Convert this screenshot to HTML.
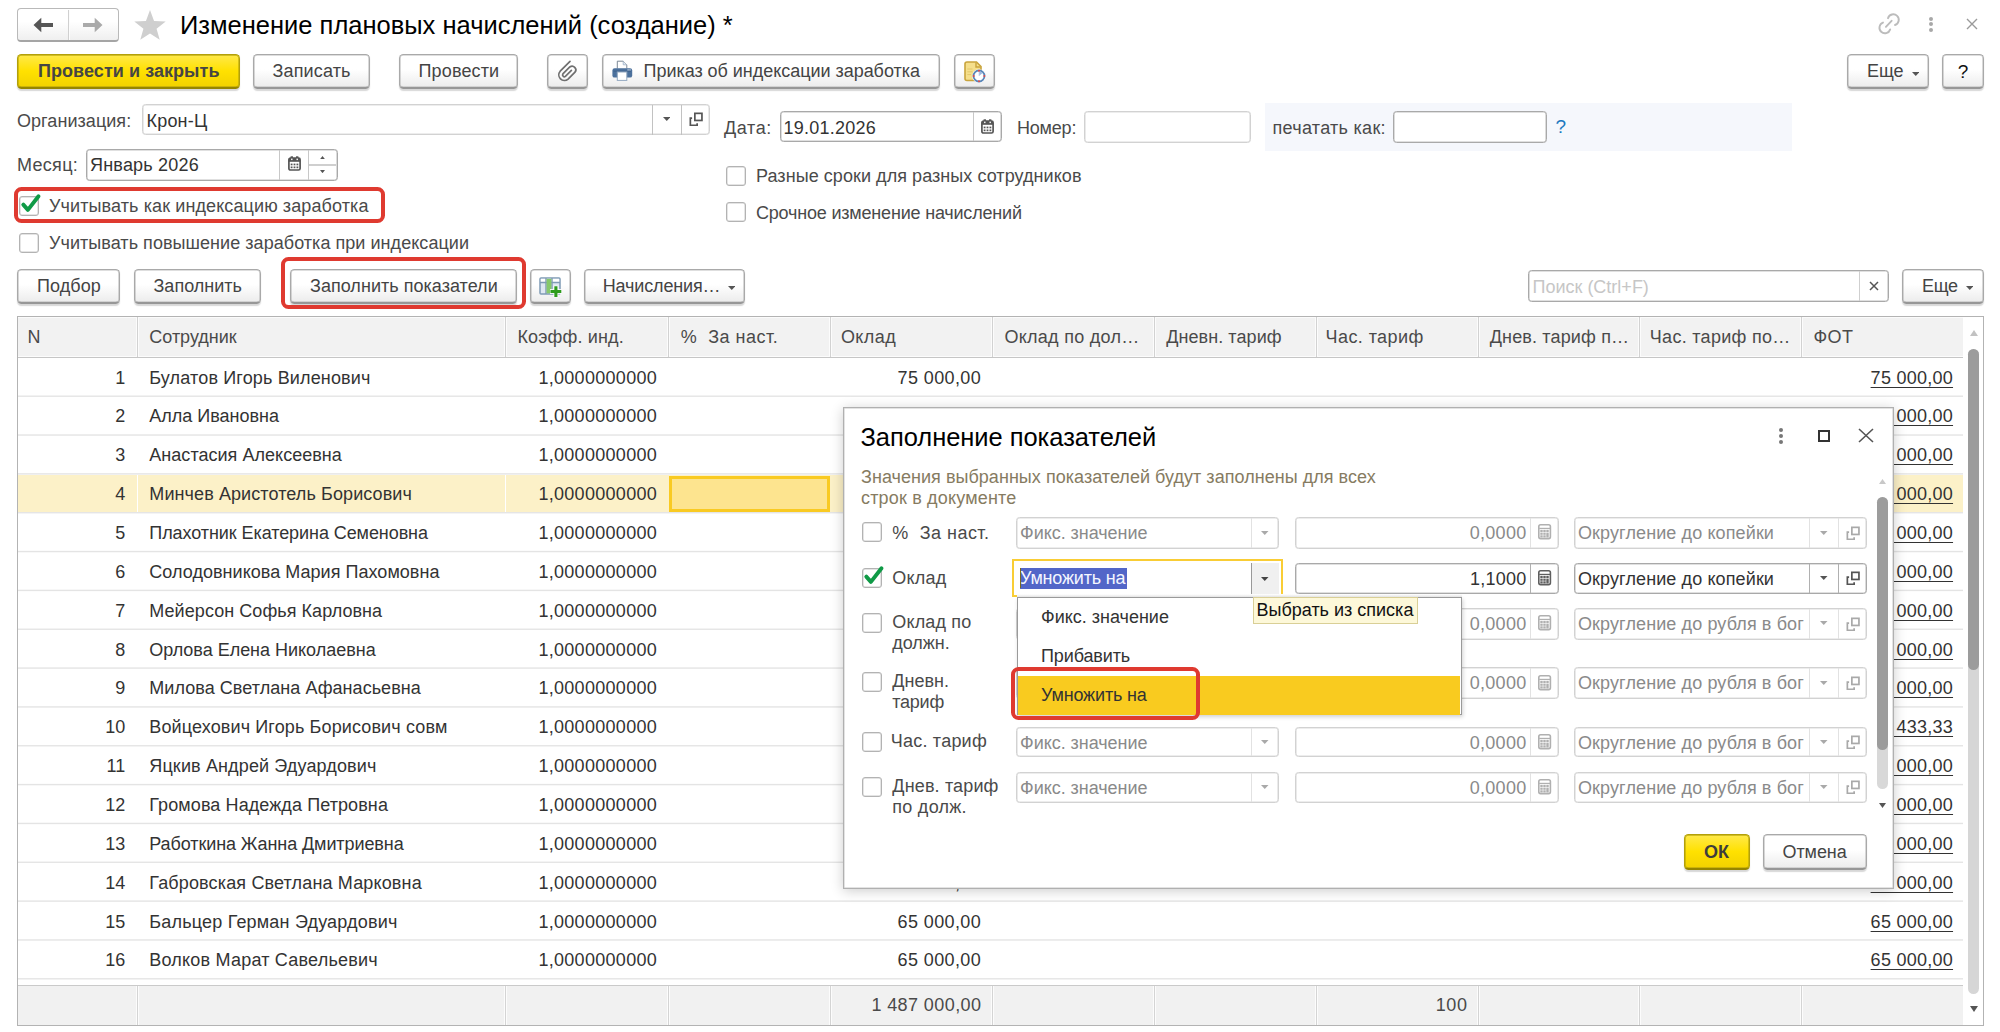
<!DOCTYPE html><html><head><meta charset="utf-8"><style>
html,body{margin:0;padding:0}
body{width:2000px;height:1032px;position:relative;overflow:hidden;background:#fff;font-family:"Liberation Sans",sans-serif;font-size:18px;color:#333}
.a{position:absolute}
.t,.t2{position:absolute;white-space:nowrap}
.btn{position:absolute;box-sizing:border-box;border:1px solid #a9a9a9;border-bottom:2px solid #979797;border-radius:4.5px;background:linear-gradient(#fff 0%,#fff 45%,#ececec 100%);box-shadow:0 1.6px 1.2px rgba(0,0,0,.16),inset 0 0 0 0.6px rgba(169,169,169,.75)}
.ybtn{border:1px solid #b3a00a;border-bottom:2px solid #958500;box-shadow:0 1.6px 1.2px rgba(0,0,0,.16),inset 0 0 0 0.7px rgba(179,160,10,.8);background:linear-gradient(#ffe94a 0%,#ffe100 50%,#f2d200 100%)}
.fld{position:absolute;box-sizing:border-box;border:1px solid #d2d2d2;border-radius:3.5px;background:#fff;box-shadow:inset 0 0 0 0.6px rgba(210,210,210,.8)}
.fldd{position:absolute;box-sizing:border-box;border:1px solid #a9a9a9;border-radius:3.5px;background:#fff;box-shadow:inset 0 0 0 0.6px rgba(169,169,169,.7)}
.vl{position:absolute;width:1.3px}
</style></head><body>

<div class="a" style="left:17px;top:8.2px;width:101.8px;height:33.5px;box-sizing:border-box;border:1.4px solid #b9b9b9;border-bottom:2px solid #a5a5a5;border-radius:4px;background:linear-gradient(#fff 40%,#efefef)"></div>
<div class="a" style="left:68.00px;top:9.50px;width:1.30px;height:30.70px;background:#d0d0d0"></div>
<div class="a" style="left:69.30px;top:9.50px;width:1.00px;height:30.70px;background:#fcfcfc"></div>
<svg class="a" style="left:32.70px;top:16.90px" width="21" height="16" viewBox="0 0 21 16"><path d="M0.5 8 L8.3 0.7 V5.9 H20 V9.9 H8.3 V15.3 Z" fill="#555"/></svg>
<svg class="a" style="left:82.00px;top:16.90px" width="21" height="16" viewBox="0 0 21 16"><path d="M20.5 8 L12.7 0.7 V5.9 H1 V9.9 H12.7 V15.3 Z" fill="#aaa"/></svg>
<svg class="a" style="left:133.00px;top:8.00px" width="34" height="34" viewBox="0 0 34 34"><polygon points="17.00,2.00 21.06,12.92 32.69,13.40 23.56,20.63 26.70,31.85 17.00,25.40 7.30,31.85 10.44,20.63 1.31,13.40 12.94,12.92" fill="#cfcfcf"/></svg>
<div class="t" style="left:180.00px;top:9.76px;font-size:25.5px;line-height:30px;color:#000;font-weight:normal;">Изменение плановых начислений (создание) *</div>
<svg class="a" style="left:1874.00px;top:10.00px" width="30" height="28" viewBox="0 0 30 28"><g fill="none" stroke="#bcbcbc" stroke-width="1.9" stroke-linecap="round"><path d="M14 8.2 A5.5 5.5 0 1 1 21 15"/><path d="M9 12.6 A5.5 5.5 0 1 0 16.2 19.4"/><path d="M17.6 10.8 L11.9 16.8"/></g></svg>
<div class="a" style="left:1928.60px;top:16.50px;width:4.00px;height:4.00px;border-radius:50%;background:#a8a8a8"></div>
<div class="a" style="left:1928.60px;top:22.00px;width:4.00px;height:4.00px;border-radius:50%;background:#a8a8a8"></div>
<div class="a" style="left:1928.60px;top:27.50px;width:4.00px;height:4.00px;border-radius:50%;background:#a8a8a8"></div>
<svg class="a" style="left:1966.00px;top:18.00px" width="12" height="12" viewBox="0 0 12 12"><path d="M1 1 L11 11 M11 1 L1 11" stroke="#9a9a9a" stroke-width="1.4"/></svg>
<div class="btn ybtn" style="left:17.00px;top:54.00px;width:223.20px;height:35.10px"></div>
<div class="t" style="left:38.00px;top:60.36px;font-size:18px;line-height:22px;color:#454545;font-weight:bold;letter-spacing:0.059px;">Провести и закрыть</div>
<div class="btn" style="left:253.00px;top:54.00px;width:117.40px;height:35.10px"></div>
<div class="t" style="left:272.50px;top:60.36px;font-size:18px;line-height:22px;color:#444;font-weight:normal;letter-spacing:0.143px;">Записать</div>
<div class="btn" style="left:399.40px;top:54.00px;width:119.00px;height:35.10px"></div>
<div class="t" style="left:418.50px;top:60.36px;font-size:18px;line-height:22px;color:#444;font-weight:normal;letter-spacing:0.143px;">Провести</div>
<div class="btn" style="left:547.40px;top:54.00px;width:41.00px;height:35.10px"></div>
<svg class="a" style="left:554.00px;top:57.00px" width="28" height="26" viewBox="0 0 28 26"><path d="M16 4.3 L6.2 14.2 A5.6 5.6 0 0 0 14.1 22.1 L21 15.2 A3.7 3.7 0 0 0 15.8 10 L8.9 16.9 A1.8 1.8 0 0 0 11.4 19.4 L17.4 13.4" fill="none" stroke="#6f6f6f" stroke-width="1.7" stroke-linecap="round"/></svg>
<div class="btn" style="left:602.30px;top:54.00px;width:337.70px;height:35.10px"></div>
<svg class="a" style="left:611.00px;top:60.00px" width="23" height="22" viewBox="0 0 23 22"><path d="M6.3 8.5 V1.2 H12.2 L15.8 4.8 V8.5" fill="#fff" stroke="#6d7b8a" stroke-width="0.9"/><path d="M12.2 1.2 V4.8 H15.8" fill="#dfe8f2" stroke="#9fb2c8" stroke-width="0.8"/><rect x="1.4" y="8.2" width="19.8" height="9.4" rx="2.2" fill="#4b709c"/><path d="M2.5 11.2 H20" stroke="#3c5f88" stroke-width="0.8"/><rect x="6.3" y="12" width="9.5" height="8.4" fill="#fff" stroke="#93a8c0" stroke-width="1"/><rect x="16.5" y="9.3" width="1.2" height="1.2" fill="#d6e0ea"/><rect x="18.4" y="9.3" width="1.2" height="1.2" fill="#d6e0ea"/></svg>
<div class="t" style="left:643.50px;top:60.36px;font-size:18px;line-height:22px;color:#444;font-weight:normal;letter-spacing:-0.034px;">Приказ об индексации заработка</div>
<div class="btn" style="left:953.50px;top:54.00px;width:41.00px;height:35.10px"></div>
<svg class="a" style="left:963.00px;top:60.00px" width="24" height="24" viewBox="0 0 24 24"><path d="M2 4 a2 2 0 0 1 2 -2 H13.5 L18 6.5 V20.5 H4 a2 2 0 0 1 -2 -2 Z" fill="#f5df8c" stroke="#c9a43c" stroke-width="1.6"/><path d="M13 2.5 V7 H17.5" fill="none" stroke="#c9a43c" stroke-width="1.4"/><path d="M4.3 9 H9.5 M4.3 11.8 H9.5 M4.3 14.6 H8" stroke="#e3c86a" stroke-width="1"/><circle cx="16" cy="16" r="6.8" fill="#fff"/><circle cx="16" cy="16" r="5.5" fill="#fff" stroke="#5a86b8" stroke-width="1.8"/><path d="M16 16 V11.3 A4.7 4.7 0 0 1 19.6 13 Z" fill="#9db8de"/><path d="M16 16 V12" stroke="#c8d6ea" stroke-width="0.8"/><circle cx="16" cy="10.7" r="1" fill="#e04848"/><circle cx="16" cy="21.3" r="1" fill="#e04848"/><circle cx="10.7" cy="16" r="1" fill="#e04848"/><circle cx="21.3" cy="16" r="1" fill="#e04848"/></svg>
<div class="btn" style="left:1847.00px;top:54.00px;width:82.00px;height:35.10px"></div>
<div class="t" style="left:1867.00px;top:60.36px;font-size:18px;line-height:22px;color:#444;font-weight:normal;">Еще</div>
<svg class="a" style="left:1911.75px;top:71.50px" width="7.5" height="4" viewBox="0 0 7.5 4"><path d="M0 0 L7.5 0 L3.75 4 Z" fill="#555"/></svg>
<div class="btn" style="left:1942.20px;top:54.00px;width:41.40px;height:35.10px"></div>
<div class="t" style="left:1957.80px;top:59.71px;font-size:19px;line-height:23px;color:#111;font-weight:normal;">?</div>
<div class="t" style="left:17.00px;top:109.76px;font-size:18px;line-height:22px;color:#4a4a4a;font-weight:normal;letter-spacing:0.055px;">Организация:</div>
<div class="fld" style="left:142.2px;top:103.6px;width:567.8px;height:31.9px"></div>
<div class="a" style="left:652.00px;top:104.50px;width:1.30px;height:30.00px;background:#c2c2c2"></div>
<div class="a" style="left:681.00px;top:104.50px;width:1.30px;height:30.00px;background:#c2c2c2"></div>
<div class="t" style="left:146.50px;top:109.76px;font-size:18px;line-height:22px;color:#333;font-weight:normal;letter-spacing:0.200px;">Крон-Ц</div>
<svg class="a" style="left:662.75px;top:116.80px" width="7.5" height="4" viewBox="0 0 7.5 4"><path d="M0 0 L7.5 0 L3.75 4 Z" fill="#555"/></svg>
<svg class="a" style="left:689.00px;top:111.50px" width="15" height="15" viewBox="0 0 15 15"><path d="M3.1 6.1 H1.35 V13.25 H8.15 V11.2" fill="none" stroke="#555" stroke-width="1.7"/><rect x="5.85" y="1.35" width="7.1" height="7.1" fill="none" stroke="#555" stroke-width="1.7"/></svg>
<div class="t" style="left:17.00px;top:154.26px;font-size:18px;line-height:22px;color:#4a4a4a;font-weight:normal;letter-spacing:0.300px;">Месяц:</div>
<div class="fldd" style="left:85.5px;top:149px;width:252.3px;height:31.5px;border-radius:3.5px"></div>
<div class="a" style="left:279.00px;top:150.00px;width:1.30px;height:30.00px;background:#c8c8c8"></div>
<div class="a" style="left:308.00px;top:150.00px;width:1.30px;height:30.00px;background:#c8c8c8"></div>
<div class="t" style="left:90.00px;top:154.26px;font-size:18px;line-height:22px;color:#333;font-weight:normal;letter-spacing:0.200px;">Январь 2026</div>
<svg class="a" style="left:288.00px;top:156.00px" width="13" height="15" viewBox="0 0 13 15"><rect x="0.9" y="2.2" width="11.2" height="11.8" rx="1.6" fill="none" stroke="#555" stroke-width="1.7"/><rect x="0.9" y="2.2" width="11.2" height="3.6" fill="#555"/><rect x="2.6" y="0.3" width="2.4" height="3" fill="#555"/><rect x="8" y="0.3" width="2.4" height="3" fill="#555"/><rect x="3.1" y="2.6" width="1.4" height="1.5" fill="#fff"/><rect x="8.5" y="2.6" width="1.4" height="1.5" fill="#fff"/><rect x="2.7" y="7.6" width="1.8" height="1.7" fill="#555"/><rect x="2.7" y="10.5" width="1.8" height="1.7" fill="#555"/><rect x="5.6" y="7.6" width="1.8" height="1.7" fill="#555"/><rect x="5.6" y="10.5" width="1.8" height="1.7" fill="#555"/><rect x="8.5" y="7.6" width="1.8" height="1.7" fill="#555"/><rect x="8.5" y="10.5" width="1.8" height="1.7" fill="#555"/></svg>
<div class="a" style="left:309.30px;top:164.30px;width:27.20px;height:1.50px;background:#cfcfcf"></div>
<svg class="a" style="left:320.00px;top:155.90px" width="5" height="3.2" viewBox="0 0 5 3.2"><path d="M0 3.2 L5 3.2 L2.5 0 Z" fill="#555"/></svg>
<svg class="a" style="left:320.00px;top:169.90px" width="5" height="3.2" viewBox="0 0 5 3.2"><path d="M0 0 L5 0 L2.5 3.2 Z" fill="#555"/></svg>
<div class="t" style="left:724.00px;top:116.96px;font-size:18px;line-height:22px;color:#4a4a4a;font-weight:normal;letter-spacing:0.600px;">Дата:</div>
<div class="fldd" style="left:779.6px;top:111.3px;width:222.7px;height:31.2px"></div>
<div class="a" style="left:973.00px;top:112.30px;width:1.30px;height:29.20px;background:#c8c8c8"></div>
<div class="t" style="left:783.50px;top:116.96px;font-size:18px;line-height:22px;color:#333;font-weight:normal;letter-spacing:0.233px;">19.01.2026</div>
<svg class="a" style="left:981.00px;top:118.50px" width="13" height="15" viewBox="0 0 13 15"><rect x="0.9" y="2.2" width="11.2" height="11.8" rx="1.6" fill="none" stroke="#555" stroke-width="1.7"/><rect x="0.9" y="2.2" width="11.2" height="3.6" fill="#555"/><rect x="2.6" y="0.3" width="2.4" height="3" fill="#555"/><rect x="8" y="0.3" width="2.4" height="3" fill="#555"/><rect x="3.1" y="2.6" width="1.4" height="1.5" fill="#fff"/><rect x="8.5" y="2.6" width="1.4" height="1.5" fill="#fff"/><rect x="2.7" y="7.6" width="1.8" height="1.7" fill="#555"/><rect x="2.7" y="10.5" width="1.8" height="1.7" fill="#555"/><rect x="5.6" y="7.6" width="1.8" height="1.7" fill="#555"/><rect x="5.6" y="10.5" width="1.8" height="1.7" fill="#555"/><rect x="8.5" y="7.6" width="1.8" height="1.7" fill="#555"/><rect x="8.5" y="10.5" width="1.8" height="1.7" fill="#555"/></svg>
<div class="t" style="left:1017.00px;top:116.96px;font-size:18px;line-height:22px;color:#4a4a4a;font-weight:normal;letter-spacing:-0.200px;">Номер:</div>
<div class="fld" style="left:1084px;top:111.3px;width:167.3px;height:31.7px"></div>
<div class="a" style="left:1265.30px;top:103.00px;width:527.20px;height:47.50px;background:#f5f7fc"></div>
<div class="t" style="left:1272.50px;top:116.96px;font-size:18px;line-height:22px;color:#4a4a4a;font-weight:normal;letter-spacing:0.292px;">печатать как:</div>
<div class="fldd" style="left:1393px;top:111.3px;width:153.5px;height:31.7px"></div>
<div class="t" style="left:1555.50px;top:115.31px;font-size:19px;line-height:23px;color:#1b78c0;font-weight:normal;">?</div>
<div class="a" style="left:18.70px;top:195.60px;width:20.30px;height:20.00px;box-sizing:border-box;border:1px solid #b3b3b3;border-radius:3px;background:#fff;box-shadow:inset 0 0 0 0.5px rgba(179,179,179,.7)"></div>
<svg class="a" style="left:17.70px;top:189.60px" width="26" height="27" viewBox="0 0 26 27"><path d="M5.3 14.6 L9.9 19.9 L20.5 6.2" fill="none" stroke="#0f9a46" stroke-width="3.9" stroke-linecap="round" stroke-linejoin="round"/></svg>
<div class="t" style="left:49.00px;top:195.16px;font-size:18px;line-height:22px;color:#4a4a4a;font-weight:normal;letter-spacing:0.103px;">Учитывать как индексацию заработка</div>
<div class="a" style="left:18.70px;top:233.20px;width:20.30px;height:20.00px;box-sizing:border-box;border:1px solid #b3b3b3;border-radius:3px;background:#fff;box-shadow:inset 0 0 0 0.5px rgba(179,179,179,.7)"></div>
<div class="t" style="left:49.00px;top:231.86px;font-size:18px;line-height:22px;color:#4a4a4a;font-weight:normal;letter-spacing:0.047px;">Учитывать повышение заработка при индексации</div>
<div class="a" style="left:726.20px;top:165.70px;width:20.30px;height:20.00px;box-sizing:border-box;border:1px solid #b3b3b3;border-radius:3px;background:#fff;box-shadow:inset 0 0 0 0.5px rgba(179,179,179,.7)"></div>
<div class="t" style="left:756.00px;top:164.76px;font-size:18px;line-height:22px;color:#4a4a4a;font-weight:normal;letter-spacing:0.059px;">Разные сроки для разных сотрудников</div>
<div class="a" style="left:726.20px;top:202.40px;width:20.30px;height:20.00px;box-sizing:border-box;border:1px solid #b3b3b3;border-radius:3px;background:#fff;box-shadow:inset 0 0 0 0.5px rgba(179,179,179,.7)"></div>
<div class="t" style="left:756.00px;top:201.86px;font-size:18px;line-height:22px;color:#4a4a4a;font-weight:normal;letter-spacing:-0.193px;">Срочное изменение начислений</div>
<div class="a" style="left:14.40px;top:186.70px;width:370.80px;height:36.50px;box-sizing:border-box;border:4px solid #df3a30;border-radius:7.5px"></div>
<div class="btn" style="left:17.40px;top:268.60px;width:103.00px;height:35.30px"></div>
<div class="t" style="left:37.00px;top:274.96px;font-size:18px;line-height:22px;color:#444;font-weight:normal;letter-spacing:0.080px;">Подбор</div>
<div class="btn" style="left:133.60px;top:268.60px;width:127.80px;height:35.30px"></div>
<div class="t" style="left:153.50px;top:274.96px;font-size:18px;line-height:22px;color:#444;font-weight:normal;">Заполнить</div>
<div class="btn" style="left:290.00px;top:268.60px;width:226.60px;height:35.30px"></div>
<div class="t" style="left:310.00px;top:274.96px;font-size:18px;line-height:22px;color:#444;font-weight:normal;letter-spacing:0.032px;">Заполнить показатели</div>
<div class="a" style="left:281.00px;top:256.60px;width:244.60px;height:52.00px;box-sizing:border-box;border:4px solid #df3a30;border-radius:7.5px"></div>
<div class="btn" style="left:530.00px;top:268.60px;width:41.00px;height:35.30px"></div>
<svg class="a" style="left:539.00px;top:276.50px" width="24" height="21" viewBox="0 0 24 21"><rect x="1" y="1" width="20" height="16" rx="1" fill="#dfe8f2" stroke="#7f9bb5" stroke-width="1.5"/><rect x="1.8" y="1.8" width="18.4" height="3.6" fill="#fff"/><path d="M1 5.5 H21 M7 1 V17 M13 1 V17" stroke="#7f9bb5" stroke-width="1.4"/><rect x="7.6" y="1.8" width="4.8" height="14.5" fill="#86c96a"/><path d="M11 14.5 H22.8 M16.9 8.7 V20.4" stroke="#fff" stroke-width="5" opacity="0.85"/><path d="M11.5 14.5 H22.3 M16.9 9.2 V19.9" stroke="#2e9c1c" stroke-width="3.1"/></svg>
<div class="btn" style="left:584.40px;top:268.60px;width:160.60px;height:35.30px"></div>
<div class="t" style="left:602.70px;top:274.96px;font-size:18px;line-height:22px;color:#444;font-weight:normal;letter-spacing:-0.140px;">Начисления…</div>
<svg class="a" style="left:727.75px;top:286.30px" width="7.5" height="4" viewBox="0 0 7.5 4"><path d="M0 0 L7.5 0 L3.75 4 Z" fill="#555"/></svg>
<div class="fldd" style="left:1528.3px;top:270px;width:360.5px;height:32px"></div>
<div class="a" style="left:1859.00px;top:271.00px;width:1.30px;height:30.00px;background:#cfcfcf"></div>
<div class="t" style="left:1532.50px;top:276.26px;font-size:18px;line-height:22px;color:#c6c6c6;font-weight:normal;">Поиск (Ctrl+F)</div>
<svg class="a" style="left:1869.00px;top:281.00px" width="10" height="10" viewBox="0 0 10 10"><path d="M1 1 L9 9 M9 1 L1 9" stroke="#555" stroke-width="1.5"/></svg>
<div class="btn" style="left:1901.80px;top:268.80px;width:82.00px;height:35.10px"></div>
<div class="t" style="left:1922.00px;top:274.96px;font-size:18px;line-height:22px;color:#444;font-weight:normal;letter-spacing:-0.250px;">Еще</div>
<svg class="a" style="left:1965.75px;top:286.30px" width="7.5" height="4" viewBox="0 0 7.5 4"><path d="M0 0 L7.5 0 L3.75 4 Z" fill="#555"/></svg>
<div class="a" style="left:17.00px;top:316.30px;width:1966.80px;height:710.20px;box-sizing:border-box;border:1.4px solid #b3b3b3;border-bottom-width:1.8px"></div>
<div class="a" style="left:18.00px;top:317.00px;width:1945.30px;height:41.00px;background:#f2f2f2"></div>
<div class="a" style="left:18.00px;top:317.00px;width:1945.30px;height:1.00px;background:#fbfbfb"></div>
<div class="a" style="left:18.00px;top:356.00px;width:1945.30px;height:1.00px;background:#fcfcfc"></div>
<div class="a" style="left:18.00px;top:357.00px;width:1945.30px;height:1.00px;background:#c6c6c6"></div>
<div class="a" style="left:136.00px;top:318.00px;width:1.00px;height:38.00px;background:#fcfcfc"></div>
<div class="a" style="left:137.00px;top:317.00px;width:1.00px;height:40.00px;background:#d2d2d2"></div>
<div class="a" style="left:138.00px;top:318.00px;width:1.00px;height:38.00px;background:#fcfcfc"></div>
<div class="a" style="left:504.00px;top:318.00px;width:1.00px;height:38.00px;background:#fcfcfc"></div>
<div class="a" style="left:505.00px;top:317.00px;width:1.00px;height:40.00px;background:#d2d2d2"></div>
<div class="a" style="left:506.00px;top:318.00px;width:1.00px;height:38.00px;background:#fcfcfc"></div>
<div class="a" style="left:667.00px;top:318.00px;width:1.00px;height:38.00px;background:#fcfcfc"></div>
<div class="a" style="left:668.00px;top:317.00px;width:1.00px;height:40.00px;background:#d2d2d2"></div>
<div class="a" style="left:669.00px;top:318.00px;width:1.00px;height:38.00px;background:#fcfcfc"></div>
<div class="a" style="left:829.00px;top:318.00px;width:1.00px;height:38.00px;background:#fcfcfc"></div>
<div class="a" style="left:830.00px;top:317.00px;width:1.00px;height:40.00px;background:#d2d2d2"></div>
<div class="a" style="left:831.00px;top:318.00px;width:1.00px;height:38.00px;background:#fcfcfc"></div>
<div class="a" style="left:991.00px;top:318.00px;width:1.00px;height:38.00px;background:#fcfcfc"></div>
<div class="a" style="left:992.00px;top:317.00px;width:1.00px;height:40.00px;background:#d2d2d2"></div>
<div class="a" style="left:993.00px;top:318.00px;width:1.00px;height:38.00px;background:#fcfcfc"></div>
<div class="a" style="left:1153.00px;top:318.00px;width:1.00px;height:38.00px;background:#fcfcfc"></div>
<div class="a" style="left:1154.00px;top:317.00px;width:1.00px;height:40.00px;background:#d2d2d2"></div>
<div class="a" style="left:1155.00px;top:318.00px;width:1.00px;height:38.00px;background:#fcfcfc"></div>
<div class="a" style="left:1315.00px;top:318.00px;width:1.00px;height:38.00px;background:#fcfcfc"></div>
<div class="a" style="left:1316.00px;top:317.00px;width:1.00px;height:40.00px;background:#d2d2d2"></div>
<div class="a" style="left:1317.00px;top:318.00px;width:1.00px;height:38.00px;background:#fcfcfc"></div>
<div class="a" style="left:1477.00px;top:318.00px;width:1.00px;height:38.00px;background:#fcfcfc"></div>
<div class="a" style="left:1478.00px;top:317.00px;width:1.00px;height:40.00px;background:#d2d2d2"></div>
<div class="a" style="left:1479.00px;top:318.00px;width:1.00px;height:38.00px;background:#fcfcfc"></div>
<div class="a" style="left:1638.00px;top:318.00px;width:1.00px;height:38.00px;background:#fcfcfc"></div>
<div class="a" style="left:1639.00px;top:317.00px;width:1.00px;height:40.00px;background:#d2d2d2"></div>
<div class="a" style="left:1640.00px;top:318.00px;width:1.00px;height:38.00px;background:#fcfcfc"></div>
<div class="a" style="left:1800.00px;top:318.00px;width:1.00px;height:38.00px;background:#fcfcfc"></div>
<div class="a" style="left:1801.00px;top:317.00px;width:1.00px;height:40.00px;background:#d2d2d2"></div>
<div class="a" style="left:1802.00px;top:318.00px;width:1.00px;height:38.00px;background:#fcfcfc"></div>
<div class="t" style="left:27.59px;top:325.96px;font-size:18px;line-height:22px;color:#4a4a4a;font-weight:normal;">N</div>
<div class="t" style="left:149.30px;top:325.96px;font-size:18px;line-height:22px;color:#4a4a4a;font-weight:normal;letter-spacing:-0.012px;">Сотрудник</div>
<div class="t" style="left:517.39px;top:325.96px;font-size:18px;line-height:22px;color:#4a4a4a;font-weight:normal;letter-spacing:0.150px;">Коэфф. инд.</div>
<div class="t" style="left:680.69px;top:325.96px;font-size:18px;line-height:22px;color:#4a4a4a;font-weight:normal;letter-spacing:0.490px;">%&nbsp;&nbsp;За наст.</div>
<div class="t" style="left:840.89px;top:325.96px;font-size:18px;line-height:22px;color:#4a4a4a;font-weight:normal;letter-spacing:0.450px;">Оклад</div>
<div class="t" style="left:1004.39px;top:325.96px;font-size:18px;line-height:22px;color:#4a4a4a;font-weight:normal;letter-spacing:0.283px;">Оклад по дол…</div>
<div class="t" style="left:1166.19px;top:325.96px;font-size:18px;line-height:22px;color:#4a4a4a;font-weight:normal;letter-spacing:0.073px;">Дневн. тариф</div>
<div class="t" style="left:1325.59px;top:325.96px;font-size:18px;line-height:22px;color:#4a4a4a;font-weight:normal;letter-spacing:0.411px;">Час. тариф</div>
<div class="t" style="left:1489.69px;top:325.96px;font-size:18px;line-height:22px;color:#4a4a4a;font-weight:normal;letter-spacing:0.154px;">Днев. тариф п…</div>
<div class="t" style="left:1649.80px;top:325.96px;font-size:18px;line-height:22px;color:#4a4a4a;font-weight:normal;letter-spacing:0.292px;">Час. тариф по…</div>
<div class="t" style="left:1813.50px;top:325.96px;font-size:18px;line-height:22px;color:#4a4a4a;font-weight:normal;letter-spacing:0.350px;">ФОТ</div>
<div class="a" style="left:18.00px;top:395px;width:1945.30px;height:1px;background:rgb(242,242,242)"></div>
<div class="a" style="left:18.00px;top:396px;width:1945.30px;height:1px;background:rgb(231,231,231)"></div>
<div class="t" style="right:1874.80px;top:366.56px;font-size:18px;line-height:22px;color:#333;font-weight:normal;">1</div>
<div class="t" style="left:149.30px;top:366.56px;font-size:18px;line-height:22px;color:#333;font-weight:normal;letter-spacing:0.150px;">Булатов Игорь Виленович</div>
<div class="t" style="left:538.38px;top:366.56px;font-size:18px;line-height:22px;color:#333;font-weight:normal;letter-spacing:0.300px;">1,0000000000</div>
<div class="t" style="left:897.52px;top:366.56px;font-size:18px;line-height:22px;color:#333;font-weight:normal;letter-spacing:0.400px;">75 000,00</div>
<div class="t" style="left:1870.62px;top:366.56px;font-size:18px;line-height:22px;color:#333;font-weight:normal;letter-spacing:0.262px;text-decoration:underline;text-underline-offset:2.5px;text-decoration-thickness:1.3px">75 000,00</div>
<div class="a" style="left:18.00px;top:434px;width:1945.30px;height:1px;background:rgb(237,237,237)"></div>
<div class="a" style="left:18.00px;top:435px;width:1945.30px;height:1px;background:rgb(235,235,235)"></div>
<div class="t" style="right:1874.80px;top:405.42px;font-size:18px;line-height:22px;color:#333;font-weight:normal;">2</div>
<div class="t" style="left:149.30px;top:405.42px;font-size:18px;line-height:22px;color:#333;font-weight:normal;letter-spacing:-0.017px;">Алла Ивановна</div>
<div class="t" style="left:538.38px;top:405.42px;font-size:18px;line-height:22px;color:#333;font-weight:normal;letter-spacing:0.300px;">1,0000000000</div>
<div class="t" style="left:897.52px;top:405.42px;font-size:18px;line-height:22px;color:#333;font-weight:normal;letter-spacing:0.400px;">65 000,00</div>
<div class="t" style="left:1870.62px;top:405.42px;font-size:18px;line-height:22px;color:#333;font-weight:normal;letter-spacing:0.262px;text-decoration:underline;text-underline-offset:2.5px;text-decoration-thickness:1.3px">65 000,00</div>
<div class="a" style="left:18.00px;top:473px;width:1945.30px;height:1px;background:rgb(233,233,233)"></div>
<div class="a" style="left:18.00px;top:474px;width:1945.30px;height:1px;background:rgb(239,239,239)"></div>
<div class="t" style="right:1874.80px;top:444.28px;font-size:18px;line-height:22px;color:#333;font-weight:normal;">3</div>
<div class="t" style="left:149.30px;top:444.28px;font-size:18px;line-height:22px;color:#333;font-weight:normal;letter-spacing:0.032px;">Анастасия Алексеевна</div>
<div class="t" style="left:538.38px;top:444.28px;font-size:18px;line-height:22px;color:#333;font-weight:normal;letter-spacing:0.300px;">1,0000000000</div>
<div class="t" style="left:897.52px;top:444.28px;font-size:18px;line-height:22px;color:#333;font-weight:normal;letter-spacing:0.400px;">65 000,00</div>
<div class="t" style="left:1870.62px;top:444.28px;font-size:18px;line-height:22px;color:#333;font-weight:normal;letter-spacing:0.262px;text-decoration:underline;text-underline-offset:2.5px;text-decoration-thickness:1.3px">65 000,00</div>
<div class="a" style="left:18.40px;top:474.98px;width:1944.90px;height:37.56px;background:#fcf1c8"></div>
<div class="a" style="left:136.70px;top:474.98px;width:1.30px;height:37.56px;background:#fff"></div>
<div class="a" style="left:504.80px;top:474.98px;width:1.30px;height:37.56px;background:#fff"></div>
<div class="a" style="left:991.80px;top:474.98px;width:1.30px;height:37.56px;background:#fff"></div>
<div class="a" style="left:1153.60px;top:474.98px;width:1.30px;height:37.56px;background:#fff"></div>
<div class="a" style="left:1315.60px;top:474.98px;width:1.30px;height:37.56px;background:#fff"></div>
<div class="a" style="left:1477.10px;top:474.98px;width:1.30px;height:37.56px;background:#fff"></div>
<div class="a" style="left:1638.90px;top:474.98px;width:1.30px;height:37.56px;background:#fff"></div>
<div class="a" style="left:1800.90px;top:474.98px;width:1.30px;height:37.56px;background:#fff"></div>
<div class="a" style="left:668.90px;top:475.88px;width:161.00px;height:36.36px;box-sizing:border-box;border:3px solid #f9ca22;background:#fde48f"></div>
<div class="a" style="left:18.00px;top:512px;width:1945.30px;height:1px;background:rgb(229,229,229)"></div>
<div class="a" style="left:18.00px;top:513px;width:1945.30px;height:1px;background:rgb(244,244,244)"></div>
<div class="t" style="right:1874.80px;top:483.14px;font-size:18px;line-height:22px;color:#333;font-weight:normal;">4</div>
<div class="t" style="left:149.30px;top:483.14px;font-size:18px;line-height:22px;color:#333;font-weight:normal;letter-spacing:0.096px;">Минчев Аристотель Борисович</div>
<div class="t" style="left:538.38px;top:483.14px;font-size:18px;line-height:22px;color:#333;font-weight:normal;letter-spacing:0.300px;">1,0000000000</div>
<div class="t" style="left:897.52px;top:483.14px;font-size:18px;line-height:22px;color:#333;font-weight:normal;letter-spacing:0.400px;">65 000,00</div>
<div class="t" style="left:1870.62px;top:483.14px;font-size:18px;line-height:22px;color:#333;font-weight:normal;letter-spacing:0.262px;text-decoration:underline;text-underline-offset:2.5px;text-decoration-thickness:1.3px">65 000,00</div>
<div class="a" style="left:18.00px;top:550px;width:1945.30px;height:1px;background:rgb(251,251,251)"></div>
<div class="a" style="left:18.00px;top:551px;width:1945.30px;height:1px;background:rgb(228,228,228)"></div>
<div class="a" style="left:18.00px;top:552px;width:1945.30px;height:1px;background:rgb(248,248,248)"></div>
<div class="t" style="right:1874.80px;top:522.00px;font-size:18px;line-height:22px;color:#333;font-weight:normal;">5</div>
<div class="t" style="left:149.30px;top:522.00px;font-size:18px;line-height:22px;color:#333;font-weight:normal;letter-spacing:-0.075px;">Плахотник Екатерина Семеновна</div>
<div class="t" style="left:538.38px;top:522.00px;font-size:18px;line-height:22px;color:#333;font-weight:normal;letter-spacing:0.300px;">1,0000000000</div>
<div class="t" style="left:897.52px;top:522.00px;font-size:18px;line-height:22px;color:#333;font-weight:normal;letter-spacing:0.400px;">65 000,00</div>
<div class="t" style="left:1870.62px;top:522.00px;font-size:18px;line-height:22px;color:#333;font-weight:normal;letter-spacing:0.262px;text-decoration:underline;text-underline-offset:2.5px;text-decoration-thickness:1.3px">65 000,00</div>
<div class="a" style="left:18.00px;top:589px;width:1945.30px;height:1px;background:rgb(247,247,247)"></div>
<div class="a" style="left:18.00px;top:590px;width:1945.30px;height:1px;background:rgb(228,228,228)"></div>
<div class="a" style="left:18.00px;top:591px;width:1945.30px;height:1px;background:rgb(252,252,252)"></div>
<div class="t" style="right:1874.80px;top:560.86px;font-size:18px;line-height:22px;color:#333;font-weight:normal;">6</div>
<div class="t" style="left:149.30px;top:560.86px;font-size:18px;line-height:22px;color:#333;font-weight:normal;letter-spacing:0.036px;">Солодовникова Мария Пахомовна</div>
<div class="t" style="left:538.38px;top:560.86px;font-size:18px;line-height:22px;color:#333;font-weight:normal;letter-spacing:0.300px;">1,0000000000</div>
<div class="t" style="left:897.52px;top:560.86px;font-size:18px;line-height:22px;color:#333;font-weight:normal;letter-spacing:0.400px;">65 000,00</div>
<div class="t" style="left:1870.62px;top:560.86px;font-size:18px;line-height:22px;color:#333;font-weight:normal;letter-spacing:0.262px;text-decoration:underline;text-underline-offset:2.5px;text-decoration-thickness:1.3px">65 000,00</div>
<div class="a" style="left:18.00px;top:628px;width:1945.30px;height:1px;background:rgb(243,243,243)"></div>
<div class="a" style="left:18.00px;top:629px;width:1945.30px;height:1px;background:rgb(230,230,230)"></div>
<div class="t" style="right:1874.80px;top:599.72px;font-size:18px;line-height:22px;color:#333;font-weight:normal;">7</div>
<div class="t" style="left:149.30px;top:599.72px;font-size:18px;line-height:22px;color:#333;font-weight:normal;letter-spacing:0.059px;">Мейерсон Софья Карловна</div>
<div class="t" style="left:538.38px;top:599.72px;font-size:18px;line-height:22px;color:#333;font-weight:normal;letter-spacing:0.300px;">1,0000000000</div>
<div class="t" style="left:897.52px;top:599.72px;font-size:18px;line-height:22px;color:#333;font-weight:normal;letter-spacing:0.400px;">65 000,00</div>
<div class="t" style="left:1870.62px;top:599.72px;font-size:18px;line-height:22px;color:#333;font-weight:normal;letter-spacing:0.262px;text-decoration:underline;text-underline-offset:2.5px;text-decoration-thickness:1.3px">65 000,00</div>
<div class="a" style="left:18.00px;top:667px;width:1945.30px;height:1px;background:rgb(238,238,238)"></div>
<div class="a" style="left:18.00px;top:668px;width:1945.30px;height:1px;background:rgb(234,234,234)"></div>
<div class="t" style="right:1874.80px;top:638.58px;font-size:18px;line-height:22px;color:#333;font-weight:normal;">8</div>
<div class="t" style="left:149.30px;top:638.58px;font-size:18px;line-height:22px;color:#333;font-weight:normal;letter-spacing:-0.018px;">Орлова Елена Николаевна</div>
<div class="t" style="left:538.38px;top:638.58px;font-size:18px;line-height:22px;color:#333;font-weight:normal;letter-spacing:0.300px;">1,0000000000</div>
<div class="t" style="left:897.52px;top:638.58px;font-size:18px;line-height:22px;color:#333;font-weight:normal;letter-spacing:0.400px;">65 000,00</div>
<div class="t" style="left:1870.62px;top:638.58px;font-size:18px;line-height:22px;color:#333;font-weight:normal;letter-spacing:0.262px;text-decoration:underline;text-underline-offset:2.5px;text-decoration-thickness:1.3px">65 000,00</div>
<div class="a" style="left:18.00px;top:706px;width:1945.30px;height:1px;background:rgb(234,234,234)"></div>
<div class="a" style="left:18.00px;top:707px;width:1945.30px;height:1px;background:rgb(238,238,238)"></div>
<div class="t" style="right:1874.80px;top:677.44px;font-size:18px;line-height:22px;color:#333;font-weight:normal;">9</div>
<div class="t" style="left:149.30px;top:677.44px;font-size:18px;line-height:22px;color:#333;font-weight:normal;letter-spacing:0.054px;">Милова Светлана Афанасьевна</div>
<div class="t" style="left:538.38px;top:677.44px;font-size:18px;line-height:22px;color:#333;font-weight:normal;letter-spacing:0.300px;">1,0000000000</div>
<div class="t" style="left:897.52px;top:677.44px;font-size:18px;line-height:22px;color:#333;font-weight:normal;letter-spacing:0.400px;">65 000,00</div>
<div class="t" style="left:1870.62px;top:677.44px;font-size:18px;line-height:22px;color:#333;font-weight:normal;letter-spacing:0.262px;text-decoration:underline;text-underline-offset:2.5px;text-decoration-thickness:1.3px">65 000,00</div>
<div class="a" style="left:18.00px;top:745px;width:1945.30px;height:1px;background:rgb(230,230,230)"></div>
<div class="a" style="left:18.00px;top:746px;width:1945.30px;height:1px;background:rgb(243,243,243)"></div>
<div class="t" style="left:105.27px;top:716.30px;font-size:18px;line-height:22px;color:#333;font-weight:normal;">10</div>
<div class="t" style="left:149.30px;top:716.30px;font-size:18px;line-height:22px;color:#333;font-weight:normal;letter-spacing:0.127px;">Войцехович Игорь Борисович совм</div>
<div class="t" style="left:538.38px;top:716.30px;font-size:18px;line-height:22px;color:#333;font-weight:normal;letter-spacing:0.300px;">1,0000000000</div>
<div class="t" style="left:897.52px;top:716.30px;font-size:18px;line-height:22px;color:#333;font-weight:normal;letter-spacing:0.400px;">65 000,00</div>
<div class="t" style="left:1870.62px;top:716.30px;font-size:18px;line-height:22px;color:#333;font-weight:normal;letter-spacing:0.262px;text-decoration:underline;text-underline-offset:2.5px;text-decoration-thickness:1.3px">21 433,33</div>
<div class="a" style="left:18.00px;top:783px;width:1945.30px;height:1px;background:rgb(252,252,252)"></div>
<div class="a" style="left:18.00px;top:784px;width:1945.30px;height:1px;background:rgb(228,228,228)"></div>
<div class="a" style="left:18.00px;top:785px;width:1945.30px;height:1px;background:rgb(247,247,247)"></div>
<div class="t" style="right:1874.80px;top:755.16px;font-size:18px;line-height:22px;color:#333;font-weight:normal;">11</div>
<div class="t" style="left:149.30px;top:755.16px;font-size:18px;line-height:22px;color:#333;font-weight:normal;letter-spacing:0.132px;">Яцкив Андрей Эдуардович</div>
<div class="t" style="left:538.38px;top:755.16px;font-size:18px;line-height:22px;color:#333;font-weight:normal;letter-spacing:0.300px;">1,0000000000</div>
<div class="t" style="left:897.52px;top:755.16px;font-size:18px;line-height:22px;color:#333;font-weight:normal;letter-spacing:0.400px;">65 000,00</div>
<div class="t" style="left:1870.62px;top:755.16px;font-size:18px;line-height:22px;color:#333;font-weight:normal;letter-spacing:0.262px;text-decoration:underline;text-underline-offset:2.5px;text-decoration-thickness:1.3px">65 000,00</div>
<div class="a" style="left:18.00px;top:822px;width:1945.30px;height:1px;background:rgb(248,248,248)"></div>
<div class="a" style="left:18.00px;top:823px;width:1945.30px;height:1px;background:rgb(228,228,228)"></div>
<div class="a" style="left:18.00px;top:824px;width:1945.30px;height:1px;background:rgb(251,251,251)"></div>
<div class="t" style="right:1874.80px;top:794.02px;font-size:18px;line-height:22px;color:#333;font-weight:normal;">12</div>
<div class="t" style="left:149.30px;top:794.02px;font-size:18px;line-height:22px;color:#333;font-weight:normal;letter-spacing:0.091px;">Громова Надежда Петровна</div>
<div class="t" style="left:538.38px;top:794.02px;font-size:18px;line-height:22px;color:#333;font-weight:normal;letter-spacing:0.300px;">1,0000000000</div>
<div class="t" style="left:897.52px;top:794.02px;font-size:18px;line-height:22px;color:#333;font-weight:normal;letter-spacing:0.400px;">65 000,00</div>
<div class="t" style="left:1870.62px;top:794.02px;font-size:18px;line-height:22px;color:#333;font-weight:normal;letter-spacing:0.262px;text-decoration:underline;text-underline-offset:2.5px;text-decoration-thickness:1.3px">65 000,00</div>
<div class="a" style="left:18.00px;top:861px;width:1945.30px;height:1px;background:rgb(244,244,244)"></div>
<div class="a" style="left:18.00px;top:862px;width:1945.30px;height:1px;background:rgb(229,229,229)"></div>
<div class="t" style="right:1874.80px;top:832.88px;font-size:18px;line-height:22px;color:#333;font-weight:normal;">13</div>
<div class="t" style="left:149.30px;top:832.88px;font-size:18px;line-height:22px;color:#333;font-weight:normal;letter-spacing:-0.092px;">Работкина Жанна Дмитриевна</div>
<div class="t" style="left:538.38px;top:832.88px;font-size:18px;line-height:22px;color:#333;font-weight:normal;letter-spacing:0.300px;">1,0000000000</div>
<div class="t" style="left:897.52px;top:832.88px;font-size:18px;line-height:22px;color:#333;font-weight:normal;letter-spacing:0.400px;">65 000,00</div>
<div class="t" style="left:1870.62px;top:832.88px;font-size:18px;line-height:22px;color:#333;font-weight:normal;letter-spacing:0.262px;text-decoration:underline;text-underline-offset:2.5px;text-decoration-thickness:1.3px">65 000,00</div>
<div class="a" style="left:18.00px;top:900px;width:1945.30px;height:1px;background:rgb(239,239,239)"></div>
<div class="a" style="left:18.00px;top:901px;width:1945.30px;height:1px;background:rgb(233,233,233)"></div>
<div class="t" style="right:1874.80px;top:871.74px;font-size:18px;line-height:22px;color:#333;font-weight:normal;">14</div>
<div class="t" style="left:149.30px;top:871.74px;font-size:18px;line-height:22px;color:#333;font-weight:normal;letter-spacing:0.148px;">Габровская Светлана Марковна</div>
<div class="t" style="left:538.38px;top:871.74px;font-size:18px;line-height:22px;color:#333;font-weight:normal;letter-spacing:0.300px;">1,0000000000</div>
<div class="t" style="left:897.52px;top:871.74px;font-size:18px;line-height:22px;color:#333;font-weight:normal;letter-spacing:0.400px;">65 000,00</div>
<div class="t" style="left:1870.62px;top:871.74px;font-size:18px;line-height:22px;color:#333;font-weight:normal;letter-spacing:0.262px;text-decoration:underline;text-underline-offset:2.5px;text-decoration-thickness:1.3px">65 000,00</div>
<div class="a" style="left:18.00px;top:939px;width:1945.30px;height:1px;background:rgb(235,235,235)"></div>
<div class="a" style="left:18.00px;top:940px;width:1945.30px;height:1px;background:rgb(237,237,237)"></div>
<div class="t" style="right:1874.80px;top:910.60px;font-size:18px;line-height:22px;color:#333;font-weight:normal;">15</div>
<div class="t" style="left:149.30px;top:910.60px;font-size:18px;line-height:22px;color:#333;font-weight:normal;letter-spacing:0.192px;">Бальцер Герман Эдуардович</div>
<div class="t" style="left:538.38px;top:910.60px;font-size:18px;line-height:22px;color:#333;font-weight:normal;letter-spacing:0.300px;">1,0000000000</div>
<div class="t" style="left:897.52px;top:910.60px;font-size:18px;line-height:22px;color:#333;font-weight:normal;letter-spacing:0.400px;">65 000,00</div>
<div class="t" style="left:1870.62px;top:910.60px;font-size:18px;line-height:22px;color:#333;font-weight:normal;letter-spacing:0.262px;text-decoration:underline;text-underline-offset:2.5px;text-decoration-thickness:1.3px">65 000,00</div>
<div class="a" style="left:18.00px;top:978px;width:1945.30px;height:1px;background:rgb(231,231,231)"></div>
<div class="a" style="left:18.00px;top:979px;width:1945.30px;height:1px;background:rgb(242,242,242)"></div>
<div class="t" style="left:105.27px;top:949.46px;font-size:18px;line-height:22px;color:#333;font-weight:normal;">16</div>
<div class="t" style="left:149.30px;top:949.46px;font-size:18px;line-height:22px;color:#333;font-weight:normal;letter-spacing:0.209px;">Волков Марат Савельевич</div>
<div class="t" style="left:538.38px;top:949.46px;font-size:18px;line-height:22px;color:#333;font-weight:normal;letter-spacing:0.300px;">1,0000000000</div>
<div class="t" style="left:897.52px;top:949.46px;font-size:18px;line-height:22px;color:#333;font-weight:normal;letter-spacing:0.400px;">65 000,00</div>
<div class="t" style="left:1870.62px;top:949.46px;font-size:18px;line-height:22px;color:#333;font-weight:normal;letter-spacing:0.262px;text-decoration:underline;text-underline-offset:2.5px;text-decoration-thickness:1.3px">65 000,00</div>
<div class="a" style="left:18.00px;top:985.00px;width:1945.30px;height:40.00px;background:#f1f1f1"></div>
<div class="a" style="left:18.00px;top:985.00px;width:1945.30px;height:1.00px;background:#cacaca"></div>
<div class="a" style="left:136.00px;top:986.00px;width:1.00px;height:39.00px;background:#fcfcfc"></div>
<div class="a" style="left:137.00px;top:986.00px;width:1.00px;height:39.00px;background:#d4d4d4"></div>
<div class="a" style="left:138.00px;top:986.00px;width:1.00px;height:39.00px;background:#fcfcfc"></div>
<div class="a" style="left:504.00px;top:986.00px;width:1.00px;height:39.00px;background:#fcfcfc"></div>
<div class="a" style="left:505.00px;top:986.00px;width:1.00px;height:39.00px;background:#d4d4d4"></div>
<div class="a" style="left:506.00px;top:986.00px;width:1.00px;height:39.00px;background:#fcfcfc"></div>
<div class="a" style="left:667.00px;top:986.00px;width:1.00px;height:39.00px;background:#fcfcfc"></div>
<div class="a" style="left:668.00px;top:986.00px;width:1.00px;height:39.00px;background:#d4d4d4"></div>
<div class="a" style="left:669.00px;top:986.00px;width:1.00px;height:39.00px;background:#fcfcfc"></div>
<div class="a" style="left:829.00px;top:986.00px;width:1.00px;height:39.00px;background:#fcfcfc"></div>
<div class="a" style="left:830.00px;top:986.00px;width:1.00px;height:39.00px;background:#d4d4d4"></div>
<div class="a" style="left:831.00px;top:986.00px;width:1.00px;height:39.00px;background:#fcfcfc"></div>
<div class="a" style="left:991.00px;top:986.00px;width:1.00px;height:39.00px;background:#fcfcfc"></div>
<div class="a" style="left:992.00px;top:986.00px;width:1.00px;height:39.00px;background:#d4d4d4"></div>
<div class="a" style="left:993.00px;top:986.00px;width:1.00px;height:39.00px;background:#fcfcfc"></div>
<div class="a" style="left:1153.00px;top:986.00px;width:1.00px;height:39.00px;background:#fcfcfc"></div>
<div class="a" style="left:1154.00px;top:986.00px;width:1.00px;height:39.00px;background:#d4d4d4"></div>
<div class="a" style="left:1155.00px;top:986.00px;width:1.00px;height:39.00px;background:#fcfcfc"></div>
<div class="a" style="left:1315.00px;top:986.00px;width:1.00px;height:39.00px;background:#fcfcfc"></div>
<div class="a" style="left:1316.00px;top:986.00px;width:1.00px;height:39.00px;background:#d4d4d4"></div>
<div class="a" style="left:1317.00px;top:986.00px;width:1.00px;height:39.00px;background:#fcfcfc"></div>
<div class="a" style="left:1477.00px;top:986.00px;width:1.00px;height:39.00px;background:#fcfcfc"></div>
<div class="a" style="left:1478.00px;top:986.00px;width:1.00px;height:39.00px;background:#d4d4d4"></div>
<div class="a" style="left:1479.00px;top:986.00px;width:1.00px;height:39.00px;background:#fcfcfc"></div>
<div class="a" style="left:1638.00px;top:986.00px;width:1.00px;height:39.00px;background:#fcfcfc"></div>
<div class="a" style="left:1639.00px;top:986.00px;width:1.00px;height:39.00px;background:#d4d4d4"></div>
<div class="a" style="left:1640.00px;top:986.00px;width:1.00px;height:39.00px;background:#fcfcfc"></div>
<div class="a" style="left:1800.00px;top:986.00px;width:1.00px;height:39.00px;background:#fcfcfc"></div>
<div class="a" style="left:1801.00px;top:986.00px;width:1.00px;height:39.00px;background:#d4d4d4"></div>
<div class="a" style="left:1802.00px;top:986.00px;width:1.00px;height:39.00px;background:#fcfcfc"></div>
<div class="t" style="left:871.39px;top:994.26px;font-size:18px;line-height:22px;color:#4a4a4a;font-weight:normal;letter-spacing:0.409px;">1 487 000,00</div>
<div class="t" style="left:1435.75px;top:994.26px;font-size:18px;line-height:22px;color:#4a4a4a;font-weight:normal;letter-spacing:0.600px;">100</div>
<svg class="a" style="left:1970px;top:329.5px" width="8" height="6"><path d="M0 6 L8 6 L4 0 Z" fill="#c2c2c2"/></svg>
<div class="a" style="left:1967.90px;top:348.50px;width:10.70px;height:645.10px;background:#d6d6d6;border-radius:6px"></div>
<div class="a" style="left:1967.90px;top:348.50px;width:10.70px;height:321.20px;background:#9c9c9c;border-radius:6px"></div>
<svg class="a" style="left:1970px;top:1005.5px" width="8" height="6"><path d="M0 0 L8 0 L4 6 Z" fill="#555"/></svg>
<div class="a" style="left:843.4px;top:407.2px;width:1050.8000000000002px;height:481.59999999999997px;box-sizing:border-box;background:#fff;border:1px solid #b0b0b0;box-shadow:0 2px 12px rgba(0,0,0,.2),inset 0 0 0 0.5px rgba(176,176,176,.7)"></div>
<div class="t" style="left:860.50px;top:421.56px;font-size:25.5px;line-height:30px;color:#000;font-weight:normal;letter-spacing:-0.048px;">Заполнение показателей</div>
<div class="a" style="left:1779.00px;top:428.00px;width:4.40px;height:4.40px;border-radius:50%;background:#777"></div>
<div class="a" style="left:1779.00px;top:433.70px;width:4.40px;height:4.40px;border-radius:50%;background:#777"></div>
<div class="a" style="left:1779.00px;top:439.50px;width:4.40px;height:4.40px;border-radius:50%;background:#777"></div>
<div class="a" style="left:1818.00px;top:430.20px;width:11.80px;height:11.40px;box-sizing:border-box;border:2.1px solid #333"></div>
<svg class="a" style="left:1858.00px;top:428.00px" width="16" height="15" viewBox="0 0 16 15"><path d="M1 1 L15 14 M15 1 L1 14" stroke="#555" stroke-width="1.6"/></svg>
<div class="t" style="left:861.00px;top:466.16px;font-size:18px;line-height:22px;color:#867b61;font-weight:normal;letter-spacing:0.037px;">Значения выбранных показателей будут заполнены для всех</div>
<div class="t" style="left:861.00px;top:487.36px;font-size:18px;line-height:22px;color:#867b61;font-weight:normal;letter-spacing:0.175px;">строк в документе</div>
<div class="a" style="left:862.20px;top:522.30px;width:20.30px;height:20.00px;box-sizing:border-box;border:1px solid #b3b3b3;border-radius:3px;background:#fff;box-shadow:inset 0 0 0 0.5px rgba(179,179,179,.7)"></div>
<div class="t" style="left:892.30px;top:521.96px;font-size:18px;line-height:22px;color:#4a4a4a;font-weight:normal;letter-spacing:0.470px;">%&nbsp;&nbsp;За наст.</div>
<div class="fld" style="left:1015.5px;top:517.2px;width:263.8px;height:31.5px"></div>
<div class="a" style="left:1251.00px;top:518.20px;width:1.30px;height:29.50px;background:#e2e2e2"></div>
<div class="t" style="left:1020.00px;top:522.26px;font-size:18px;line-height:22px;color:#8a8a8a;font-weight:normal;letter-spacing:-0.038px;">Фикс. значение</div>
<svg class="a" style="left:1261.25px;top:530.50px" width="7.5" height="4" viewBox="0 0 7.5 4"><path d="M0 0 L7.5 0 L3.75 4 Z" fill="#a9a9a9"/></svg>
<div class="fld" style="left:1294.5px;top:517.2px;width:264.8px;height:31.5px"></div>
<div class="a" style="left:1529.60px;top:518.20px;width:1.30px;height:29.50px;background:#e2e2e2"></div>
<div class="t" style="left:1469.75px;top:522.26px;font-size:18px;line-height:22px;color:#8a8a8a;font-weight:normal;letter-spacing:0.280px;">0,0000</div>
<svg class="a" style="left:1538.40px;top:524.40px" width="14" height="16" viewBox="0 0 14 16"><rect x="0.8" y="0.8" width="11.6" height="13.8" rx="1.8" fill="#fff" stroke="#b0b0b0" stroke-width="1.6"/><path d="M1.2 4.4 H12" stroke="#b0b0b0" stroke-width="1.2"/><rect x="2.3" y="5.8" width="2.4" height="2.2" fill="#b0b0b0"/><rect x="5.3" y="5.8" width="2.4" height="2.2" fill="#b0b0b0"/><rect x="8.3" y="5.8" width="2.4" height="2.2" fill="#b0b0b0"/><rect x="2.3" y="8.6" width="2.4" height="2.2" fill="#b0b0b0"/><rect x="5.3" y="8.6" width="2.4" height="2.2" fill="#b0b0b0"/><rect x="2.3" y="11.3" width="2.4" height="2.2" fill="#b0b0b0"/><rect x="5.3" y="11.3" width="2.4" height="2.2" fill="#b0b0b0"/><rect x="8.3" y="8.6" width="2.4" height="4.9" fill="#b0b0b0"/></svg>
<div class="fld" style="left:1574.1px;top:517.2px;width:293.3px;height:31.5px"></div>
<div class="a" style="left:1809.00px;top:518.20px;width:1.30px;height:29.50px;background:#e2e2e2"></div>
<div class="a" style="left:1838.00px;top:518.20px;width:1.30px;height:29.50px;background:#e2e2e2"></div>
<div class="t2" style="left:1578px;top:522.26px;width:228px;overflow:hidden;font-size:18px;line-height:22px;letter-spacing:0.11px;color:#8a8a8a">Округление до копейки</div>
<svg class="a" style="left:1820.05px;top:530.50px" width="7.5" height="4" viewBox="0 0 7.5 4"><path d="M0 0 L7.5 0 L3.75 4 Z" fill="#a9a9a9"/></svg>
<svg class="a" style="left:1846.00px;top:525.70px" width="15" height="15" viewBox="0 0 15 15"><path d="M3.1 6.1 H1.35 V13.25 H8.15 V11.2" fill="none" stroke="#a9a9a9" stroke-width="1.7"/><rect x="5.85" y="1.35" width="7.1" height="7.1" fill="none" stroke="#a9a9a9" stroke-width="1.7"/></svg>
<div class="a" style="left:862.20px;top:568.20px;width:20.30px;height:20.00px;box-sizing:border-box;border:1px solid #b3b3b3;border-radius:3px;background:#fff;box-shadow:inset 0 0 0 0.5px rgba(179,179,179,.7)"></div>
<svg class="a" style="left:861.20px;top:562.20px" width="26" height="27" viewBox="0 0 26 27"><path d="M5.3 14.6 L9.9 19.9 L20.5 6.2" fill="none" stroke="#0f9a46" stroke-width="3.9" stroke-linecap="round" stroke-linejoin="round"/></svg>
<div class="t" style="left:892.30px;top:567.36px;font-size:18px;line-height:22px;color:#4a4a4a;font-weight:normal;letter-spacing:0.200px;">Оклад</div>
<div class="fldd" style="left:1294.5px;top:562.7px;width:264.8px;height:31.59999999999991px"></div>
<div class="a" style="left:1529.60px;top:563.70px;width:1.30px;height:29.60px;background:#b0b0b0"></div>
<div class="t" style="left:1469.95px;top:567.76px;font-size:18px;line-height:22px;color:#333;font-weight:normal;letter-spacing:0.240px;">1,1000</div>
<svg class="a" style="left:1538.40px;top:569.90px" width="14" height="16" viewBox="0 0 14 16"><rect x="0.8" y="0.8" width="11.6" height="13.8" rx="1.8" fill="#fff" stroke="#5f5f5f" stroke-width="1.6"/><path d="M1.2 4.4 H12" stroke="#5f5f5f" stroke-width="1.2"/><rect x="2.3" y="5.8" width="2.4" height="2.2" fill="#5f5f5f"/><rect x="5.3" y="5.8" width="2.4" height="2.2" fill="#5f5f5f"/><rect x="8.3" y="5.8" width="2.4" height="2.2" fill="#5f5f5f"/><rect x="2.3" y="8.6" width="2.4" height="2.2" fill="#5f5f5f"/><rect x="5.3" y="8.6" width="2.4" height="2.2" fill="#5f5f5f"/><rect x="2.3" y="11.3" width="2.4" height="2.2" fill="#5f5f5f"/><rect x="5.3" y="11.3" width="2.4" height="2.2" fill="#5f5f5f"/><rect x="8.3" y="8.6" width="2.4" height="4.9" fill="#5f5f5f"/></svg>
<div class="fldd" style="left:1574.1px;top:562.7px;width:293.3px;height:31.59999999999991px"></div>
<div class="a" style="left:1809.00px;top:563.70px;width:1.30px;height:29.60px;background:#b0b0b0"></div>
<div class="a" style="left:1838.00px;top:563.70px;width:1.30px;height:29.60px;background:#b0b0b0"></div>
<div class="t2" style="left:1578px;top:567.76px;width:228px;overflow:hidden;font-size:18px;line-height:22px;letter-spacing:0.11px;color:#333">Округление до копейки</div>
<svg class="a" style="left:1820.05px;top:576.00px" width="7.5" height="4" viewBox="0 0 7.5 4"><path d="M0 0 L7.5 0 L3.75 4 Z" fill="#555"/></svg>
<svg class="a" style="left:1846.00px;top:571.20px" width="15" height="15" viewBox="0 0 15 15"><path d="M3.1 6.1 H1.35 V13.25 H8.15 V11.2" fill="none" stroke="#555" stroke-width="1.7"/><rect x="5.85" y="1.35" width="7.1" height="7.1" fill="none" stroke="#555" stroke-width="1.7"/></svg>
<div class="a" style="left:862.20px;top:613.40px;width:20.30px;height:20.00px;box-sizing:border-box;border:1px solid #b3b3b3;border-radius:3px;background:#fff;box-shadow:inset 0 0 0 0.5px rgba(179,179,179,.7)"></div>
<div class="t" style="left:892.30px;top:611.26px;font-size:18px;line-height:22px;color:#4a4a4a;font-weight:normal;letter-spacing:0.143px;">Оклад по</div>
<div class="t" style="left:892.30px;top:632.26px;font-size:18px;line-height:22px;color:#4a4a4a;font-weight:normal;letter-spacing:-0.040px;">должн.</div>
<div class="fld" style="left:1015.5px;top:608px;width:263.8px;height:31.5px"></div>
<div class="a" style="left:1251.00px;top:609.00px;width:1.30px;height:29.50px;background:#e2e2e2"></div>
<div class="t" style="left:1020.00px;top:613.06px;font-size:18px;line-height:22px;color:#8a8a8a;font-weight:normal;letter-spacing:-0.038px;">Фикс. значение</div>
<svg class="a" style="left:1261.25px;top:621.30px" width="7.5" height="4" viewBox="0 0 7.5 4"><path d="M0 0 L7.5 0 L3.75 4 Z" fill="#a9a9a9"/></svg>
<div class="fld" style="left:1294.5px;top:608px;width:264.8px;height:31.5px"></div>
<div class="a" style="left:1529.60px;top:609.00px;width:1.30px;height:29.50px;background:#e2e2e2"></div>
<div class="t" style="left:1469.75px;top:613.06px;font-size:18px;line-height:22px;color:#8a8a8a;font-weight:normal;letter-spacing:0.280px;">0,0000</div>
<svg class="a" style="left:1538.40px;top:615.20px" width="14" height="16" viewBox="0 0 14 16"><rect x="0.8" y="0.8" width="11.6" height="13.8" rx="1.8" fill="#fff" stroke="#b0b0b0" stroke-width="1.6"/><path d="M1.2 4.4 H12" stroke="#b0b0b0" stroke-width="1.2"/><rect x="2.3" y="5.8" width="2.4" height="2.2" fill="#b0b0b0"/><rect x="5.3" y="5.8" width="2.4" height="2.2" fill="#b0b0b0"/><rect x="8.3" y="5.8" width="2.4" height="2.2" fill="#b0b0b0"/><rect x="2.3" y="8.6" width="2.4" height="2.2" fill="#b0b0b0"/><rect x="5.3" y="8.6" width="2.4" height="2.2" fill="#b0b0b0"/><rect x="2.3" y="11.3" width="2.4" height="2.2" fill="#b0b0b0"/><rect x="5.3" y="11.3" width="2.4" height="2.2" fill="#b0b0b0"/><rect x="8.3" y="8.6" width="2.4" height="4.9" fill="#b0b0b0"/></svg>
<div class="fld" style="left:1574.1px;top:608px;width:293.3px;height:31.5px"></div>
<div class="a" style="left:1809.00px;top:609.00px;width:1.30px;height:29.50px;background:#e2e2e2"></div>
<div class="a" style="left:1838.00px;top:609.00px;width:1.30px;height:29.50px;background:#e2e2e2"></div>
<div class="t2" style="left:1578px;top:613.06px;width:228px;overflow:hidden;font-size:18px;line-height:22px;letter-spacing:0.11px;color:#8a8a8a">Округление до рубля в бог</div>
<svg class="a" style="left:1820.05px;top:621.30px" width="7.5" height="4" viewBox="0 0 7.5 4"><path d="M0 0 L7.5 0 L3.75 4 Z" fill="#a9a9a9"/></svg>
<svg class="a" style="left:1846.00px;top:616.50px" width="15" height="15" viewBox="0 0 15 15"><path d="M3.1 6.1 H1.35 V13.25 H8.15 V11.2" fill="none" stroke="#a9a9a9" stroke-width="1.7"/><rect x="5.85" y="1.35" width="7.1" height="7.1" fill="none" stroke="#a9a9a9" stroke-width="1.7"/></svg>
<div class="a" style="left:862.20px;top:672.40px;width:20.30px;height:20.00px;box-sizing:border-box;border:1px solid #b3b3b3;border-radius:3px;background:#fff;box-shadow:inset 0 0 0 0.5px rgba(179,179,179,.7)"></div>
<div class="t" style="left:892.30px;top:670.16px;font-size:18px;line-height:22px;color:#4a4a4a;font-weight:normal;letter-spacing:0.020px;">Дневн.</div>
<div class="t" style="left:892.30px;top:690.86px;font-size:18px;line-height:22px;color:#4a4a4a;font-weight:normal;letter-spacing:-0.250px;">тариф</div>
<div class="fld" style="left:1015.5px;top:667.4px;width:263.8px;height:31.399999999999977px"></div>
<div class="a" style="left:1251.00px;top:668.40px;width:1.30px;height:29.40px;background:#e2e2e2"></div>
<div class="t" style="left:1020.00px;top:672.46px;font-size:18px;line-height:22px;color:#8a8a8a;font-weight:normal;letter-spacing:-0.038px;">Фикс. значение</div>
<svg class="a" style="left:1261.25px;top:680.70px" width="7.5" height="4" viewBox="0 0 7.5 4"><path d="M0 0 L7.5 0 L3.75 4 Z" fill="#a9a9a9"/></svg>
<div class="fld" style="left:1294.5px;top:667.4px;width:264.8px;height:31.399999999999977px"></div>
<div class="a" style="left:1529.60px;top:668.40px;width:1.30px;height:29.40px;background:#e2e2e2"></div>
<div class="t" style="left:1469.75px;top:672.46px;font-size:18px;line-height:22px;color:#8a8a8a;font-weight:normal;letter-spacing:0.280px;">0,0000</div>
<svg class="a" style="left:1538.40px;top:674.60px" width="14" height="16" viewBox="0 0 14 16"><rect x="0.8" y="0.8" width="11.6" height="13.8" rx="1.8" fill="#fff" stroke="#b0b0b0" stroke-width="1.6"/><path d="M1.2 4.4 H12" stroke="#b0b0b0" stroke-width="1.2"/><rect x="2.3" y="5.8" width="2.4" height="2.2" fill="#b0b0b0"/><rect x="5.3" y="5.8" width="2.4" height="2.2" fill="#b0b0b0"/><rect x="8.3" y="5.8" width="2.4" height="2.2" fill="#b0b0b0"/><rect x="2.3" y="8.6" width="2.4" height="2.2" fill="#b0b0b0"/><rect x="5.3" y="8.6" width="2.4" height="2.2" fill="#b0b0b0"/><rect x="2.3" y="11.3" width="2.4" height="2.2" fill="#b0b0b0"/><rect x="5.3" y="11.3" width="2.4" height="2.2" fill="#b0b0b0"/><rect x="8.3" y="8.6" width="2.4" height="4.9" fill="#b0b0b0"/></svg>
<div class="fld" style="left:1574.1px;top:667.4px;width:293.3px;height:31.399999999999977px"></div>
<div class="a" style="left:1809.00px;top:668.40px;width:1.30px;height:29.40px;background:#e2e2e2"></div>
<div class="a" style="left:1838.00px;top:668.40px;width:1.30px;height:29.40px;background:#e2e2e2"></div>
<div class="t2" style="left:1578px;top:672.46px;width:228px;overflow:hidden;font-size:18px;line-height:22px;letter-spacing:0.11px;color:#8a8a8a">Округление до рубля в бог</div>
<svg class="a" style="left:1820.05px;top:680.70px" width="7.5" height="4" viewBox="0 0 7.5 4"><path d="M0 0 L7.5 0 L3.75 4 Z" fill="#a9a9a9"/></svg>
<svg class="a" style="left:1846.00px;top:675.90px" width="15" height="15" viewBox="0 0 15 15"><path d="M3.1 6.1 H1.35 V13.25 H8.15 V11.2" fill="none" stroke="#a9a9a9" stroke-width="1.7"/><rect x="5.85" y="1.35" width="7.1" height="7.1" fill="none" stroke="#a9a9a9" stroke-width="1.7"/></svg>
<div class="a" style="left:862.20px;top:731.50px;width:20.30px;height:20.00px;box-sizing:border-box;border:1px solid #b3b3b3;border-radius:3px;background:#fff;box-shadow:inset 0 0 0 0.5px rgba(179,179,179,.7)"></div>
<div class="t" style="left:890.70px;top:729.96px;font-size:18px;line-height:22px;color:#4a4a4a;font-weight:normal;letter-spacing:0.233px;">Час. тариф</div>
<div class="fld" style="left:1015.5px;top:726.6px;width:263.8px;height:30.5px"></div>
<div class="a" style="left:1251.00px;top:727.60px;width:1.30px;height:28.50px;background:#e2e2e2"></div>
<div class="t" style="left:1020.00px;top:731.66px;font-size:18px;line-height:22px;color:#8a8a8a;font-weight:normal;letter-spacing:-0.038px;">Фикс. значение</div>
<svg class="a" style="left:1261.25px;top:739.90px" width="7.5" height="4" viewBox="0 0 7.5 4"><path d="M0 0 L7.5 0 L3.75 4 Z" fill="#a9a9a9"/></svg>
<div class="fld" style="left:1294.5px;top:726.6px;width:264.8px;height:30.5px"></div>
<div class="a" style="left:1529.60px;top:727.60px;width:1.30px;height:28.50px;background:#e2e2e2"></div>
<div class="t" style="left:1469.75px;top:731.66px;font-size:18px;line-height:22px;color:#8a8a8a;font-weight:normal;letter-spacing:0.280px;">0,0000</div>
<svg class="a" style="left:1538.40px;top:733.80px" width="14" height="16" viewBox="0 0 14 16"><rect x="0.8" y="0.8" width="11.6" height="13.8" rx="1.8" fill="#fff" stroke="#b0b0b0" stroke-width="1.6"/><path d="M1.2 4.4 H12" stroke="#b0b0b0" stroke-width="1.2"/><rect x="2.3" y="5.8" width="2.4" height="2.2" fill="#b0b0b0"/><rect x="5.3" y="5.8" width="2.4" height="2.2" fill="#b0b0b0"/><rect x="8.3" y="5.8" width="2.4" height="2.2" fill="#b0b0b0"/><rect x="2.3" y="8.6" width="2.4" height="2.2" fill="#b0b0b0"/><rect x="5.3" y="8.6" width="2.4" height="2.2" fill="#b0b0b0"/><rect x="2.3" y="11.3" width="2.4" height="2.2" fill="#b0b0b0"/><rect x="5.3" y="11.3" width="2.4" height="2.2" fill="#b0b0b0"/><rect x="8.3" y="8.6" width="2.4" height="4.9" fill="#b0b0b0"/></svg>
<div class="fld" style="left:1574.1px;top:726.6px;width:293.3px;height:30.5px"></div>
<div class="a" style="left:1809.00px;top:727.60px;width:1.30px;height:28.50px;background:#e2e2e2"></div>
<div class="a" style="left:1838.00px;top:727.60px;width:1.30px;height:28.50px;background:#e2e2e2"></div>
<div class="t2" style="left:1578px;top:731.66px;width:228px;overflow:hidden;font-size:18px;line-height:22px;letter-spacing:0.11px;color:#8a8a8a">Округление до рубля в бог</div>
<svg class="a" style="left:1820.05px;top:739.90px" width="7.5" height="4" viewBox="0 0 7.5 4"><path d="M0 0 L7.5 0 L3.75 4 Z" fill="#a9a9a9"/></svg>
<svg class="a" style="left:1846.00px;top:735.10px" width="15" height="15" viewBox="0 0 15 15"><path d="M3.1 6.1 H1.35 V13.25 H8.15 V11.2" fill="none" stroke="#a9a9a9" stroke-width="1.7"/><rect x="5.85" y="1.35" width="7.1" height="7.1" fill="none" stroke="#a9a9a9" stroke-width="1.7"/></svg>
<div class="a" style="left:862.20px;top:777.20px;width:20.30px;height:20.00px;box-sizing:border-box;border:1px solid #b3b3b3;border-radius:3px;background:#fff;box-shadow:inset 0 0 0 0.5px rgba(179,179,179,.7)"></div>
<div class="t" style="left:892.30px;top:774.56px;font-size:18px;line-height:22px;color:#4a4a4a;font-weight:normal;letter-spacing:0.150px;">Днев. тариф</div>
<div class="t" style="left:892.30px;top:795.56px;font-size:18px;line-height:22px;color:#4a4a4a;font-weight:normal;letter-spacing:0.271px;">по долж.</div>
<div class="fld" style="left:1015.5px;top:771.6px;width:263.8px;height:31.199999999999932px"></div>
<div class="a" style="left:1251.00px;top:772.60px;width:1.30px;height:29.20px;background:#e2e2e2"></div>
<div class="t" style="left:1020.00px;top:776.66px;font-size:18px;line-height:22px;color:#8a8a8a;font-weight:normal;letter-spacing:-0.038px;">Фикс. значение</div>
<svg class="a" style="left:1261.25px;top:784.90px" width="7.5" height="4" viewBox="0 0 7.5 4"><path d="M0 0 L7.5 0 L3.75 4 Z" fill="#a9a9a9"/></svg>
<div class="fld" style="left:1294.5px;top:771.6px;width:264.8px;height:31.199999999999932px"></div>
<div class="a" style="left:1529.60px;top:772.60px;width:1.30px;height:29.20px;background:#e2e2e2"></div>
<div class="t" style="left:1469.75px;top:776.66px;font-size:18px;line-height:22px;color:#8a8a8a;font-weight:normal;letter-spacing:0.280px;">0,0000</div>
<svg class="a" style="left:1538.40px;top:778.80px" width="14" height="16" viewBox="0 0 14 16"><rect x="0.8" y="0.8" width="11.6" height="13.8" rx="1.8" fill="#fff" stroke="#b0b0b0" stroke-width="1.6"/><path d="M1.2 4.4 H12" stroke="#b0b0b0" stroke-width="1.2"/><rect x="2.3" y="5.8" width="2.4" height="2.2" fill="#b0b0b0"/><rect x="5.3" y="5.8" width="2.4" height="2.2" fill="#b0b0b0"/><rect x="8.3" y="5.8" width="2.4" height="2.2" fill="#b0b0b0"/><rect x="2.3" y="8.6" width="2.4" height="2.2" fill="#b0b0b0"/><rect x="5.3" y="8.6" width="2.4" height="2.2" fill="#b0b0b0"/><rect x="2.3" y="11.3" width="2.4" height="2.2" fill="#b0b0b0"/><rect x="5.3" y="11.3" width="2.4" height="2.2" fill="#b0b0b0"/><rect x="8.3" y="8.6" width="2.4" height="4.9" fill="#b0b0b0"/></svg>
<div class="fld" style="left:1574.1px;top:771.6px;width:293.3px;height:31.199999999999932px"></div>
<div class="a" style="left:1809.00px;top:772.60px;width:1.30px;height:29.20px;background:#e2e2e2"></div>
<div class="a" style="left:1838.00px;top:772.60px;width:1.30px;height:29.20px;background:#e2e2e2"></div>
<div class="t2" style="left:1578px;top:776.66px;width:228px;overflow:hidden;font-size:18px;line-height:22px;letter-spacing:0.11px;color:#8a8a8a">Округление до рубля в бог</div>
<svg class="a" style="left:1820.05px;top:784.90px" width="7.5" height="4" viewBox="0 0 7.5 4"><path d="M0 0 L7.5 0 L3.75 4 Z" fill="#a9a9a9"/></svg>
<svg class="a" style="left:1846.00px;top:780.10px" width="15" height="15" viewBox="0 0 15 15"><path d="M3.1 6.1 H1.35 V13.25 H8.15 V11.2" fill="none" stroke="#a9a9a9" stroke-width="1.7"/><rect x="5.85" y="1.35" width="7.1" height="7.1" fill="none" stroke="#a9a9a9" stroke-width="1.7"/></svg>
<div class="a" style="left:1012.00px;top:559.30px;width:270.70px;height:38.00px;box-sizing:border-box;border:2px solid #f9cd35;background:#fff"></div>
<div class="a" style="left:1251.50px;top:563.00px;width:27.50px;height:31.00px;background:#f0f0f0"></div>
<div class="a" style="left:1251.00px;top:563.00px;width:1.30px;height:31.00px;background:#999"></div>
<div class="a" style="left:1019.50px;top:567.70px;width:107.20px;height:21.10px;background:#5266c8"></div>
<div class="t" style="left:1020.00px;top:567.36px;font-size:18px;line-height:22px;color:#f4f6ff;font-weight:normal;letter-spacing:-0.200px;">Умножить на</div>
<div class="a" style="left:1019.60px;top:568.20px;width:1.60px;height:20.30px;background:#7a6a20"></div>
<svg class="a" style="left:1261.25px;top:576.60px" width="7.5" height="4" viewBox="0 0 7.5 4"><path d="M0 0 L7.5 0 L3.75 4 Z" fill="#444"/></svg>
<svg class="a" style="left:1879px;top:478.5px" width="7" height="5"><path d="M0 5 L7 5 L3.5 0 Z" fill="#c8c8c8"/></svg>
<div class="a" style="left:1877.00px;top:497.40px;width:11.00px;height:291.40px;background:#d8d8d8;border-radius:6px"></div>
<div class="a" style="left:1877.00px;top:497.40px;width:11.00px;height:252.60px;background:#9c9c9c;border-radius:6px"></div>
<svg class="a" style="left:1879px;top:802.5px" width="7" height="5"><path d="M0 0 L7 0 L3.5 5 Z" fill="#555"/></svg>
<div class="btn ybtn" style="left:1684.00px;top:834.40px;width:65.80px;height:35.50px"></div>
<div class="t" style="left:1704.00px;top:840.56px;font-size:18px;line-height:22px;color:#3d3d3d;font-weight:bold;">ОК</div>
<div class="btn" style="left:1762.60px;top:834.40px;width:104.00px;height:35.50px"></div>
<div class="t" style="left:1782.50px;top:840.56px;font-size:18px;line-height:22px;color:#444;font-weight:normal;letter-spacing:-0.080px;">Отмена</div>
<div class="a" style="left:1016.80px;top:594.30px;width:445.20px;height:3.20px;background:linear-gradient(#fff,#e9e9e9)"></div>
<div class="a" style="left:1016.8px;top:597.2px;width:445.2px;height:118.1px;box-sizing:border-box;background:#fff;border:1.5px solid #9a9a9a;box-shadow:1px 2px 4px rgba(0,0,0,.18)"></div>
<div class="a" style="left:1018.30px;top:675.90px;width:442.20px;height:38.90px;background:#f9cb1f"></div>
<div class="t" style="left:1041.00px;top:606.36px;font-size:18px;line-height:22px;color:#333;font-weight:normal;letter-spacing:-0.008px;">Фикс. значение</div>
<div class="t" style="left:1041.00px;top:644.76px;font-size:18px;line-height:22px;color:#333;font-weight:normal;letter-spacing:-0.125px;">Прибавить</div>
<div class="t" style="left:1041.00px;top:684.36px;font-size:18px;line-height:22px;color:#333;font-weight:normal;letter-spacing:-0.160px;">Умножить на</div>
<div class="a" style="left:1010.80px;top:667.30px;width:189.60px;height:52.30px;box-sizing:border-box;border:4px solid #df3a30;border-radius:7.5px"></div>
<div class="a" style="left:1252.50px;top:596.70px;width:165.50px;height:26.90px;box-sizing:border-box;background:#fdf8d9;border:1.2px solid #d9cf96"></div>
<div class="t" style="left:1256.50px;top:599.16px;font-size:18px;line-height:22px;color:#111;font-weight:normal;">Выбрать из списка</div>
</body></html>
